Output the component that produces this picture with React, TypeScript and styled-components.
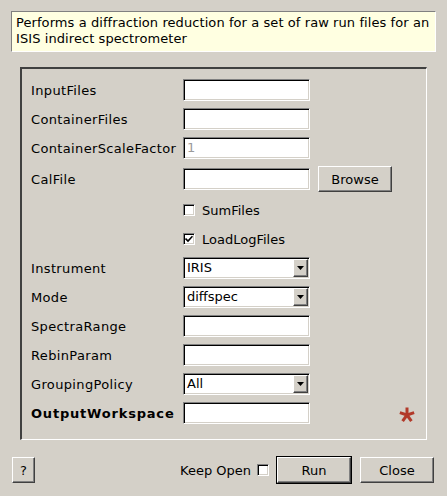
import React from "react";
import styled, { createGlobalStyle } from "styled-components";

const Global = createGlobalStyle`
  html, body { margin: 0; padding: 0; background: #d4d0c8; }
  body { font-family: "DejaVu Sans", "Liberation Sans", sans-serif; font-size: 13px; color: #000; }
`;

const Window = styled.div`
  width: 447px;
  height: 496px;
  box-sizing: border-box;
  padding: 11px 11px 0 11px;
  display: flex;
  flex-direction: column;
  background: #d4d0c8;
`;

const Description = styled.div`
  box-sizing: border-box;
  height: 41px;
  background: #ffffe1;
  border-top: 1px solid #808080;
  border-left: 1px solid #808080;
  border-right: 1px solid #ffffff;
  border-bottom: 1px solid #ffffff;
  padding: 3px 4px 0 4px;
  line-height: 16px;
  font-size: 13px;
  letter-spacing: 0.08px;
  white-space: nowrap;
`;

const Group = styled.div`
  box-sizing: border-box;
  margin: 15px 9px 0 9px;
  height: 373px;
  border-top: 2px solid #404040;
  border-left: 2px solid #404040;
  border-right: 1px solid #ffffff;
  border-bottom: 1px solid #ffffff;
  padding: 10px 0 0 9px;
  display: flex;
  flex-direction: column;
  gap: 7px;
`;

const Row = styled.div<{ $h?: number }>`
  display: flex;
  align-items: center;
  height: ${(p) => p.$h ?? 22}px;
`;

const Label = styled.div<{ $bold?: boolean }>`
  width: 152px;
  flex: none;
  font-weight: ${(p) => (p.$bold ? "bold" : "normal")};
  white-space: nowrap;
  letter-spacing: ${(p) => (p.$bold ? "0.8px" : "0.35px")};
`;

const Field = styled.div<{ $hint?: boolean }>`
  box-sizing: border-box;
  width: 127px;
  height: 22px;
  background: #fff;
  border-top: 1px solid #808080;
  border-left: 1px solid #808080;
  border-right: 1px solid #ffffff;
  border-bottom: 1px solid #ffffff;
  box-shadow: inset 1px 1px 0 #000, inset -1px -1px 0 #d4d0c8;
  padding: 0 3px;
  line-height: 20px;
  color: ${(p) => (p.$hint ? "#9a9a9a" : "#000")};
  display: flex;
  align-items: center;
  justify-content: space-between;
`;

const ComboText = styled.span`
  padding-left: 0;
`;

const ArrowButton = styled.div`
  box-sizing: border-box;
  width: 15px;
  height: 18px;
  margin-right: -2px;
  background: #d4d0c8;
  border-top: 1px solid #ffffff;
  border-left: 1px solid #ffffff;
  border-right: 1px solid #404040;
  border-bottom: 1px solid #404040;
  box-shadow: inset -1px -1px 0 #808080;
  display: flex;
  align-items: center;
  justify-content: center;
`;

const Button = styled.button<{ $w: number; $default?: boolean }>`
  box-sizing: border-box;
  width: ${(p) => p.$w}px;
  height: 26px;
  margin: 0;
  padding: 0;
  background: #d4d0c8;
  font-family: "DejaVu Sans", "Liberation Sans", sans-serif;
  font-size: 13px;
  color: #000;
  border-top: 1px solid #ffffff;
  border-left: 1px solid #ffffff;
  border-right: 1px solid #404040;
  border-bottom: 1px solid #404040;
  box-shadow: inset -1px -1px 0 #808080;
  outline: ${(p) => (p.$default ? "1px solid #000" : "none")};
  outline-offset: 0;
`;

const CheckRow = styled.div`
  display: flex;
  align-items: center;
  gap: 7px;
`;

const Box = styled.div`
  box-sizing: border-box;
  width: 12px;
  height: 12px;
  background: #fff;
  border-top: 1px solid #808080;
  border-left: 1px solid #808080;
  border-right: 1px solid #ffffff;
  border-bottom: 1px solid #ffffff;
  box-shadow: inset 1px 1px 0 #000, inset -1px -1px 0 #d4d0c8;
  display: flex;
  align-items: center;
  justify-content: center;
  flex: none;
`;

const Spacer = styled.div`
  width: 152px;
  flex: none;
`;

const Required = styled.div`
  margin-left: auto;
  margin-right: 11px;
  display: flex;
  align-items: center;
  padding-top: 4px;
`;

const Footer = styled.div`
  display: flex;
  align-items: center;
  margin-top: 17px;
  padding-left: 1px;
  padding-right: 2px;
`;

const FooterRight = styled.div`
  margin-left: auto;
  display: flex;
  align-items: center;
`;

const KeepLabel = styled.span`
  margin-right: 6px;
`;

const Check = () => (
  <svg width="8" height="8" viewBox="0 0 8 8">
    <path d="M0.5 3.5 L3 6 L7.5 1.2" fill="none" stroke="#000" strokeWidth="1.6" />
  </svg>
);

const Arrow = () => (
  <svg width="7" height="4" viewBox="0 0 7 4">
    <path d="M0 0 H7 L3.5 4 Z" fill="#000" />
  </svg>
);

const Star = () => (
  <svg width="16" height="16" viewBox="-8 -8 16 16">
    {[0, 72, 144, 216, 288].map((a) => (
      <line key={a} x1="0" y1="0" x2="0" y2="-7.5" stroke="#b23a2a" strokeWidth="3" transform={`rotate(${a})`} />
    ))}
  </svg>
);

const Combo = ({ value }: { value: string }) => (
  <Field>
    <ComboText>{value}</ComboText>
    <ArrowButton>
      <Arrow />
    </ArrowButton>
  </Field>
);

export default function App() {
  return (
    <Window>
      <Global />
      <Description>
        Performs a diffraction reduction for a set of raw run files for an
        <br />
        ISIS indirect spectrometer
      </Description>
      <Group>
        <Row>
          <Label>InputFiles</Label>
          <Field />
        </Row>
        <Row>
          <Label>ContainerFiles</Label>
          <Field />
        </Row>
        <Row>
          <Label>ContainerScaleFactor</Label>
          <Field $hint>1</Field>
        </Row>
        <Row $h={26}>
          <Label>CalFile</Label>
          <Field />
          <Button $w={74} style={{ marginLeft: 8 }}>Browse</Button>
        </Row>
        <Row>
          <Spacer />
          <CheckRow>
            <Box />
            SumFiles
          </CheckRow>
        </Row>
        <Row>
          <Spacer />
          <CheckRow>
            <Box>
              <Check />
            </Box>
            LoadLogFiles
          </CheckRow>
        </Row>
        <Row>
          <Label>Instrument</Label>
          <Combo value="IRIS" />
        </Row>
        <Row>
          <Label>Mode</Label>
          <Combo value="diffspec" />
        </Row>
        <Row>
          <Label>SpectraRange</Label>
          <Field />
        </Row>
        <Row>
          <Label>RebinParam</Label>
          <Field />
        </Row>
        <Row>
          <Label>GroupingPolicy</Label>
          <Combo value="All" />
        </Row>
        <Row>
          <Label $bold>OutputWorkspace</Label>
          <Field />
          <Required>
            <Star />
          </Required>
        </Row>
      </Group>
      <Footer>
        <Button $w={23}>?</Button>
        <FooterRight>
          <KeepLabel>Keep Open</KeepLabel>
          <Box />
          <Button $w={74} $default style={{ marginLeft: 8 }}>Run</Button>
          <Button $w={74} style={{ marginLeft: 9 }}>Close</Button>
        </FooterRight>
      </Footer>
    </Window>
  );
}
